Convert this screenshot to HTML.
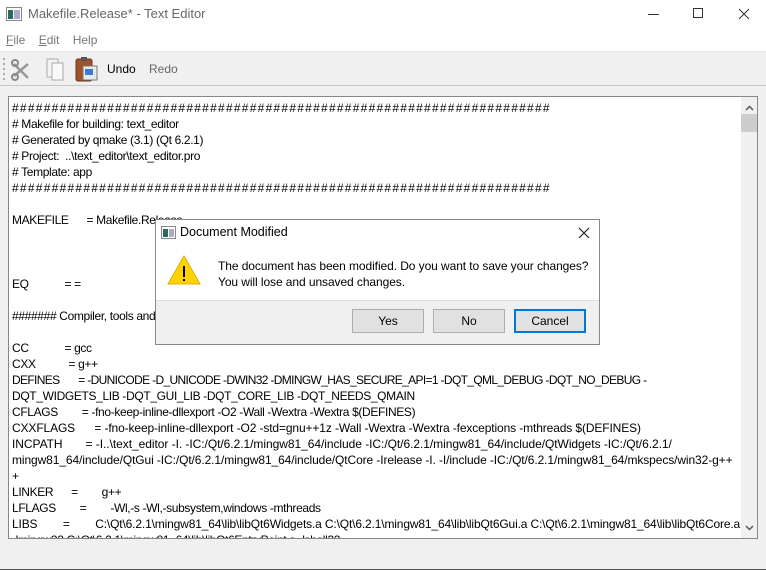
<!DOCTYPE html>
<html><head><style>
*{margin:0;padding:0;box-sizing:border-box}
body{width:766px;height:570px;overflow:hidden;background:#f0f0f0;font-family:"Liberation Sans",sans-serif;font-size:12px;color:#000;position:relative}
.abs{position:absolute}
.t{position:absolute;left:12px;white-space:pre;font-size:12px;letter-spacing:-0.35px;line-height:16px}
.h{letter-spacing:1.25px}
.btn{position:absolute;top:309px;width:72px;height:24px;background:#e1e1e1;border:1px solid #adadad;text-align:center;line-height:22px;font-size:12px}
</style></head><body>
<div class="abs" style="left:0;top:0;width:766px;height:52px;background:#fff"></div>
<svg class="abs" style="left:6px;top:7px" width="16" height="14"><rect x="0.5" y="0.5" width="15" height="13" fill="#fff" stroke="#888"/><rect x="2" y="3" width="5" height="9" fill="#2a6a5a"/><rect x="8" y="3" width="6" height="9" fill="#aac"/></svg>
<div class="abs" style="left:28px;top:6px;font-size:13px;color:#666">Makefile.Release* - Text Editor</div>
<div class="abs" style="left:648px;top:14px;width:11px;height:1px;background:#333"></div>
<div class="abs" style="left:693px;top:8px;width:10px;height:10px;border:1px solid #333"></div>
<svg class="abs" style="left:738px;top:8px" width="12" height="12"><path d="M1 1L11 11M11 1L1 11" stroke="#333"/></svg>
<div class="abs" style="left:6px;top:33px;color:#777;font-size:12px"><u>F</u>ile&nbsp;&nbsp;&nbsp;&nbsp;<u>E</u>dit&nbsp;&nbsp;&nbsp;&nbsp;Help</div>
<div class="abs" style="left:0;top:51px;width:766px;height:1px;background:#e6e6e6"></div>
<div class="abs" style="left:0;top:85px;width:766px;height:1px;background:#c8c8c8"></div>
<svg class="abs" style="left:2px;top:56px" width="100" height="28">
<g fill="#aaa"><rect x="1" y="2" width="2" height="2"/><rect x="1" y="7" width="2" height="2"/><rect x="1" y="12" width="2" height="2"/><rect x="1" y="17" width="2" height="2"/><rect x="1" y="22" width="2" height="2"/></g>
<path d="M12 20L26 8M12 8L26 22" stroke="#999" stroke-width="2.5"/><circle cx="13" cy="7" r="3" fill="none" stroke="#888" stroke-width="2"/><circle cx="13" cy="21" r="3" fill="none" stroke="#888" stroke-width="2"/>
<rect x="45" y="3" width="11" height="18" fill="#f4f4f4" stroke="#aaa"/><rect x="50" y="7" width="11" height="17" fill="#f8f8f8" stroke="#aaa"/>
<rect x="74" y="3" width="16" height="22" rx="2" fill="#a0522d" stroke="#6a3417"/><rect x="79" y="1" width="6" height="4" fill="#555"/><rect x="81" y="10" width="14" height="14" fill="#e8e8e8" stroke="#777"/><rect x="83" y="13" width="8" height="6" fill="#3a7bd5"/>
</svg>
<div class="abs" style="left:107px;top:62px;font-size:12px">Undo</div>
<div class="abs" style="left:149px;top:62px;font-size:12px;color:#666">Redo</div>
<div class="abs" style="left:8px;top:96px;width:750px;height:443px;background:#fff;border:1px solid #828790;overflow:hidden">
<div class="abs" style="left:732px;top:0;width:17px;height:441px;background:#f0f0f0"></div>
<svg class="abs" style="left:736px;top:8px" width="9" height="6"><path d="M1 5L4.5 1.5L8 5" stroke="#555" stroke-width="1.5" fill="none"/></svg>
<div class="abs" style="left:732px;top:17px;width:17px;height:18px;background:#cdcdcd"></div>
<svg class="abs" style="left:736px;top:428px" width="9" height="6"><path d="M1 1L4.5 4.5L8 1" stroke="#555" stroke-width="1.5" fill="none"/></svg>
</div>
<div class="t h" style="top:100px">####################################################################</div>
<div class="t" style="top:116px"># Makefile for building: text_editor</div>
<div class="t" style="top:132px"># Generated by qmake (3.1) (Qt 6.2.1)</div>
<div class="t" style="top:148px"># Project:  ..\text_editor\text_editor.pro</div>
<div class="t" style="top:164px"># Template: app</div>
<div class="t h" style="top:180px">####################################################################</div>
<div class="t" style="top:212px">MAKEFILE      = Makefile.Release</div>
<div class="t" style="top:276px">EQ            = =</div>
<div class="t" style="top:308px">####### Compiler, tools and options</div>
<div class="t" style="top:340px">CC            = gcc</div>
<div class="t" style="top:356px">CXX           = g++</div>
<div class="t" style="top:372px;letter-spacing:-0.65px">DEFINES       = -DUNICODE -D_UNICODE -DWIN32 -DMINGW_HAS_SECURE_API=1 -DQT_QML_DEBUG -DQT_NO_DEBUG -</div>
<div class="t" style="top:388px">DQT_WIDGETS_LIB -DQT_GUI_LIB -DQT_CORE_LIB -DQT_NEEDS_QMAIN</div>
<div class="t" style="top:404px">CFLAGS        = -fno-keep-inline-dllexport -O2 -Wall -Wextra -Wextra $(DEFINES)</div>
<div class="t" style="top:420px;letter-spacing:-0.12px">CXXFLAGS      = -fno-keep-inline-dllexport -O2 -std=gnu++1z -Wall -Wextra -Wextra -fexceptions -mthreads $(DEFINES)</div>
<div class="t" style="top:436px;letter-spacing:-0.05px">INCPATH       = -I..\text_editor -I. -IC:/Qt/6.2.1/mingw81_64/include -IC:/Qt/6.2.1/mingw81_64/include/QtWidgets -IC:/Qt/6.2.1/</div>
<div class="t" style="top:452px;letter-spacing:-0.1px">mingw81_64/include/QtGui -IC:/Qt/6.2.1/mingw81_64/include/QtCore -Irelease -I. -I/include -IC:/Qt/6.2.1/mingw81_64/mkspecs/win32-g++</div>
<div class="t" style="top:468px">+</div>
<div class="t" style="top:484px">LINKER      =        g++</div>
<div class="t" style="top:500px">LFLAGS        =        -Wl,-s -Wl,-subsystem,windows -mthreads</div>
<div class="t" style="top:516px;letter-spacing:-0.15px">LIBS        =        C:\Qt\6.2.1\mingw81_64\lib\libQt6Widgets.a C:\Qt\6.2.1\mingw81_64\lib\libQt6Gui.a C:\Qt\6.2.1\mingw81_64\lib\libQt6Core.a</div>
<div class="abs" style="left:9px;top:532px;width:731px;height:6px;overflow:hidden"><div class="t" style="left:3px;top:0">-lmingw32 C:\Qt\6.2.1\mingw81_64\lib\libQt6EntryPoint.a -lshell32</div></div>

<div class="abs" style="left:155px;top:219px;width:445px;height:126px;background:#fff;border:1px solid #888">
<svg class="abs" style="left:5px;top:6px" width="15" height="13"><rect x="0.5" y="0.5" width="14" height="12" fill="#fff" stroke="#888"/><rect x="2" y="3" width="5" height="8" fill="#2a6a5a"/><rect x="8" y="3" width="5" height="8" fill="#aac"/></svg>
<div class="abs" style="left:24px;top:5px;font-size:12.5px">Document Modified</div>
<svg class="abs" style="left:422px;top:7px" width="12" height="12"><path d="M1 1L11 11M11 1L1 11" stroke="#222" stroke-width="1.2"/></svg>
<svg class="abs" style="left:11px;top:35px" width="34" height="30"><path d="M17 1L33 29H1Z" fill="#ffd200" stroke="#e0b000"/><rect x="16" y="11" width="2" height="11" fill="#000"/><rect x="16" y="24" width="2" height="2" fill="#000"/></svg>
<div class="abs" style="left:62px;top:38px;font-size:12px;line-height:16px;white-space:pre;letter-spacing:-0.08px">The document has been modified. Do you want to save your changes?
You will lose and unsaved changes.</div>
<div class="abs" style="left:0;top:80px;width:443px;height:44px;background:#f0f0f0;border-top:1px solid #dfdfdf"></div>
</div>
<div class="btn" style="left:352px">Yes</div>
<div class="btn" style="left:433px">No</div>
<div class="btn" style="left:514px;border:2px solid #0078d7;line-height:20px">Cancel</div>
<div class="abs" style="left:0;top:569px;width:766px;height:1px;background:#555"></div>
</body></html>
